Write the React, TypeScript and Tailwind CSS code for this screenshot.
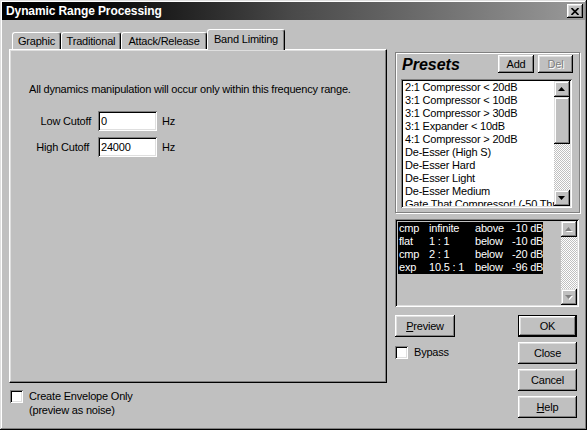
import type { ReactNode } from 'react';

const presets = [
  '2:1 Compressor < 20dB',
  '3:1 Compressor < 10dB',
  '3:1 Compressor > 30dB',
  '3:1 Expander < 10dB',
  '4:1 Compressor > 20dB',
  'De-Esser (High S)',
  'De-Esser Hard',
  'De-Esser Light',
  'De-Esser Medium',
  'Gate That Compressor! (-50 Threshold)',
];

const dynamics = [
  ['cmp', 'infinite', 'above', '-10 dB'],
  ['flat', '1 : 1', 'below', '-10 dB'],
  ['cmp', '2 : 1', 'below', '-20 dB'],
  ['exp', '10.5 : 1', 'below', '-96 dB'],
];

const Arrow = ({ down = false, disabled = false }: { down?: boolean; disabled?: boolean }) => (
  <svg width="8" height="5" viewBox="0 0 8 5" className={disabled ? 'overflow-visible' : ''}>
    {disabled && (
      <polygon
        points={down ? '1,1 8,1 4.5,5' : '4.5,1 8,5 1,5'}
        fill="#ffffff"
      />
    )}
    <polygon
      points={down ? '0,0 7,0 3.5,4' : '3.5,0 7,4 0,4'}
      fill={disabled ? '#808080' : '#000000'}
    />
  </svg>
);

const ScrollButton = ({ down = false, disabled = false }: { down?: boolean; disabled?: boolean }) => (
  <div className="w-[16px] h-[16px] shrink-0 bg-[#c0c0c0] flex items-center justify-center shadow-[inset_-1px_-1px_#000,inset_1px_1px_#dfdfdf,inset_-2px_-2px_#808080,inset_2px_2px_#fff]">
    <Arrow down={down} disabled={disabled} />
  </div>
);

const Track = ({ className = '' }: { className?: string }) => (
  <div
    className={`bg-[image:repeating-conic-gradient(#ffffff_0%_25%,#c0c0c0_0%_50%)] bg-[length:2px_2px] ${className}`}
  />
);

const Button = ({
  children,
  className = '',
  isDefault = false,
}: {
  children: ReactNode;
  className?: string;
  isDefault?: boolean;
}) => (
  <div className={`${isDefault ? 'border border-black' : ''} ${className}`}>
    <div className="w-full h-full bg-[#c0c0c0] flex items-center justify-center shadow-[inset_-1px_-1px_#000,inset_1px_1px_#fff,inset_-2px_-2px_#808080,inset_2px_2px_#dfdfdf]">
      {children}
    </div>
  </div>
);

const Checkbox = () => (
  <div className="w-[13px] h-[13px] shrink-0 bg-white shadow-[inset_1px_1px_#808080,inset_-1px_-1px_#fff,inset_2px_2px_#000,inset_-2px_-2px_#dfdfdf]" />
);

const Tab = ({ label, width, active = false }: { label: string; width: string; active?: boolean }) => (
  <div
    className={`${width} ${
      active ? 'h-[21px] relative z-10 -mb-[1px] pb-[2px]' : 'h-[17px]'
    } bg-[#c0c0c0] border-t border-l border-white border-r border-r-black rounded-t-[3px] shadow-[inset_-1px_0_#808080] flex items-center justify-center`}
  >
    {label}
  </div>
);

const App = () => {
  return (
    <div className="w-[587px] h-[430px] bg-[#c0c0c0] p-[2px] flex flex-col text-[11px] tracking-[-0.2px] text-black font-['Liberation_Sans',Arial,sans-serif] shadow-[inset_-1px_-1px_#000,inset_1px_1px_#dfdfdf,inset_-2px_-2px_#808080,inset_2px_2px_#fff]">
      {/* title bar */}
      <div className="h-[18px] shrink-0 flex items-center justify-between pl-[4px] pr-[2px] bg-linear-to-r from-black via-[#4a4a4a] to-[#9a9a9a]">
        <span className="text-white font-bold text-[12px] tracking-[-0.1px]">Dynamic Range Processing</span>
        <div className="w-[16px] h-[14px] bg-[#c0c0c0] flex items-center justify-center shadow-[inset_-1px_-1px_#000,inset_1px_1px_#fff,inset_-2px_-2px_#808080,inset_2px_2px_#dfdfdf]">
          <svg width="8" height="7" viewBox="0 0 8 7">
            <path d="M0.5 0 L7.5 7 M7.5 0 L0.5 7" stroke="#000" strokeWidth="1.6" />
          </svg>
        </div>
      </div>

      <div className="flex pt-[9px] pl-[7px]">
        {/* left side: tabs */}
        <div className="w-[378px] flex flex-col">
          <div className="flex items-end h-[20px] pl-[3px]">
            <Tab label="Graphic" width="w-[49px]" />
            <Tab label="Traditional" width="w-[60px]" />
            <Tab label="Attack/Release" width="w-[86px]" />
            <Tab label="Band Limiting" width="w-[78px]" active />
          </div>
          <div className="h-[334px] border-t border-l border-white border-r border-b border-r-black border-b-black shadow-[inset_-1px_-1px_#808080,inset_1px_1px_#dfdfdf] pt-[33px] pl-[19px]">
            <p className="leading-[13px]">All dynamics manipulation will occur only within this frequency range.</p>
            <div className="flex items-center mt-[15px]">
              <span className="w-[62px] text-right">Low Cutoff</span>
              <div className="ml-[7px] w-[59px] h-[20px] bg-white pl-[3px] flex items-center shadow-[inset_1px_1px_#808080,inset_-1px_-1px_#fff,inset_2px_2px_#000,inset_-2px_-2px_#dfdfdf]">
                0
              </div>
              <span className="ml-[5px]">Hz</span>
            </div>
            <div className="flex items-center mt-[6px]">
              <span className="w-[60px] text-right">High Cutoff</span>
              <div className="ml-[9px] w-[59px] h-[20px] bg-white pl-[3px] flex items-center shadow-[inset_1px_1px_#808080,inset_-1px_-1px_#fff,inset_2px_2px_#000,inset_-2px_-2px_#dfdfdf]">
                24000
              </div>
              <span className="ml-[5px]">Hz</span>
            </div>
          </div>
          <div className="flex items-start mt-[7px] pl-[1px]">
            <Checkbox />
            <div className="ml-[6px] leading-[14px] -mt-[1px]">
              <div>Create Envelope Only</div>
              <div>(preview as noise)</div>
            </div>
          </div>
        </div>

        {/* right side */}
        <div className="w-[185px] ml-[8px] mt-[23px] flex flex-col">
          <div className="h-[161px] border border-[#808080] shadow-[inset_1px_1px_#fff,1px_1px_#fff] flex flex-col">
            <div className="flex items-start pt-[2px] pl-[6px] pr-[6px]">
              <span className="text-[16px] font-bold italic leading-[18px] mt-[1px] tracking-[0px]">Presets</span>
              <Button className="ml-auto w-[36px] h-[18px]">Add</Button>
              <Button className="ml-[4px] w-[35px] h-[18px]">
                <span className="text-[#808080] [text-shadow:1px_1px_#fff]">Del</span>
              </Button>
            </div>
            <div className="mt-[5px] ml-[5px] w-[171px] h-[129px] bg-white p-[2px] flex shadow-[inset_1px_1px_#808080,inset_-1px_-1px_#fff,inset_2px_2px_#000,inset_-2px_-2px_#dfdfdf]">
              <div className="flex-1 overflow-hidden pl-[2px] leading-[13px] whitespace-nowrap">
                {presets.map((p) => (
                  <div key={p}>{p}</div>
                ))}
              </div>
              <div className="w-[16px] flex flex-col">
                <ScrollButton />
                <div className="h-[47px] shrink-0 bg-[#c0c0c0] shadow-[inset_-1px_-1px_#000,inset_1px_1px_#dfdfdf,inset_-2px_-2px_#808080,inset_2px_2px_#fff]" />
                <Track className="flex-1" />
                <ScrollButton down />
              </div>
            </div>
          </div>

          <div className="mt-[6px] w-[184px] h-[88px] bg-[#c0c0c0] p-[2px] flex shadow-[inset_1px_1px_#808080,inset_-1px_-1px_#fff,inset_2px_2px_#000,inset_-2px_-2px_#dfdfdf]">
            <div className="flex-1 pt-[1px] pl-[1px]">
              {dynamics.map((row, i) => (
                <div
                  key={i}
                  className="w-[145px] h-[13px] leading-[13px] bg-black text-white pl-[1px] grid grid-cols-[30px_46px_37px_1fr] whitespace-nowrap"
                >
                  {row.map((c, j) => (
                    <span key={j}>{c}</span>
                  ))}
                </div>
              ))}
            </div>
            <div className="w-[16px] flex flex-col">
              <ScrollButton disabled />
              <Track className="flex-1" />
              <ScrollButton down disabled />
            </div>
          </div>

          <div className="mt-[8px] flex justify-between pr-[3px]">
            <div className="flex flex-col">
              <Button className="w-[60px] h-[22px]">
                <span>
                  <span className="underline">P</span>review
                </span>
              </Button>
              <div className="flex items-center mt-[7px]">
                <Checkbox />
                <span className="ml-[6px]">Bypass</span>
              </div>
            </div>
            <div className="w-[59px] flex flex-col gap-[5px]">
              <Button isDefault className="h-[22px]">OK</Button>
              <Button className="h-[22px]">Close</Button>
              <Button className="h-[22px]">Cancel</Button>
              <Button className="h-[22px]">
                <span>
                  <span className="underline">H</span>elp
                </span>
              </Button>
            </div>
          </div>
        </div>
      </div>
    </div>
  );
};

export default App;
